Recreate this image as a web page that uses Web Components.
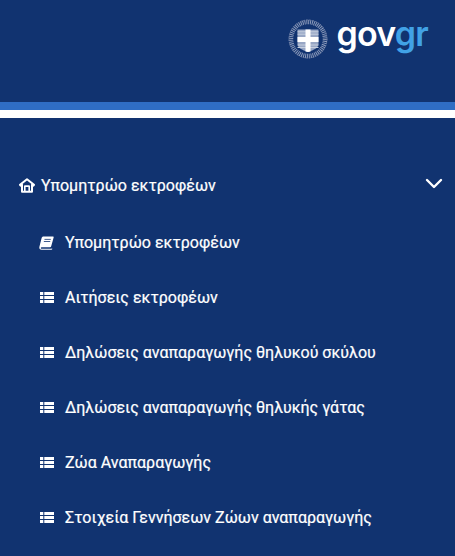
<!DOCTYPE html>
<html lang="el">
<head>
<meta charset="utf-8">
<title>Υπομητρώο εκτροφέων</title>
<style>
  html, body { margin: 0; height: 100%; background: #113370; }
  body { font-family: Roboto, "Liberation Sans", sans-serif; color: #fff; overflow: hidden; }
</style>
</head>
<body>
<gov-header></gov-header>
<side-menu>
  <menu-group label="Υπομητρώο εκτροφέων">
    <menu-link icon="book">Υπομητρώο εκτροφέων</menu-link>
    <menu-link icon="list">Αιτήσεις εκτροφέων</menu-link>
    <menu-link icon="list">Δηλώσεις αναπαραγωγής θηλυκού σκύλου</menu-link>
    <menu-link icon="list">Δηλώσεις αναπαραγωγής θηλυκής γάτας</menu-link>
    <menu-link icon="list">Ζώα Αναπαραγωγής</menu-link>
    <menu-link icon="list">Στοιχεία Γεννήσεων Ζώων αναπαραγωγής</menu-link>
  </menu-group>
</side-menu>
<script>
const ICONS = {
  home: `<svg width="16" height="15" viewBox="0 0 16 15"><path d="M8 1.200 1 6.800l.7.900 1.300-1V13.800h10V6.700l1.300 1 .7-.9L8 1.200Z" fill="none" stroke="#fff" stroke-width="2" stroke-linejoin="round"/><path d="M5 14V8.200c0-.5.4-.9.900-.9h4.200c.5 0 .9.4.9.9V14H9.400V9H6.600V14Z" fill="#fff"/></svg>`,
  book: `<svg width="17" height="16" viewBox="0 0 17 16"><path d="M5.300.5h10.400c.7 0 1.100.5.900 1.200l-2.800 10c-.2.700-.6 1-1.200 1H3.500c-1 0-1.500.3-1.500.9s.5 1 1.500 1h10.100c.3 0 .5-.1.700-.5l.9.300c-.2.700-.9 1.200-1.600 1.200H3C1 15.600 0 14.300.4 12.500L2.900 2.600C3.200 1.200 4 .5 5.300.5Z" fill="#fff"/><path d="M6.200 3.900h7.200M5.500 6.300h7.200" stroke="#113370" stroke-width=".9"/></svg>`,
  list: `<svg style="margin-left:1px" width="14" height="11" viewBox="0 0 14 11"><path d="M0 0h3.300v2.900H0ZM4.300 0H14v2.900H4.300ZM0 4h3.300v2.900H0ZM4.300 4H14v2.900H4.300ZM0 8h3.300v2.900H0ZM4.300 8H14v2.900H4.300Z" fill="#fff"/></svg>`
};

class GovHeader extends HTMLElement {
  constructor() {
    super();
    this.attachShadow({ mode: "open" });
    this.shadowRoot.innerHTML = `
      <style>
        :host { display: block; }
        .top { height: 102px; box-sizing: border-box; display: flex; justify-content: flex-end; align-items: flex-start; padding: 12px 27px 0 0; gap: 9px; }
        .logo { font: 600 34px/44px Inter, sans-serif; letter-spacing: -.8px; color: #fff; }
        .logo span { color: #41a2e6; }
        .emblem { margin-top: 7px; }
        .blue { height: 8px; background: #2f6dc4; }
        .white { height: 8px; background: #fff; }
      </style>
      <div class="top">
        <svg class="emblem" width="40" height="40" viewBox="0 0 40 40">
          <circle cx="20" cy="20" r="17" fill="none" stroke="#8e9cbb" stroke-width="4.500" stroke-dasharray="1 .9"/>
          <circle cx="20" cy="20" r="19" fill="none" stroke="#5f729c" stroke-width="1" stroke-dasharray="2 1"/>
          <path d="M9.500 10.500h21v14c0 4.500-4.500 6.500-10.500 8.500-6-2-10.500-4-10.500-8.500Z" fill="#98a7c5"/>
          <path d="M9.500 12.800h21M9.500 15.200h21M9.500 26h21M9.500 28.500h21" stroke="#c6cfdf" stroke-width="1"/>
          <path d="M17.500 10.500h5v7.500h8v5h-8v9.600l-2.500.4-2.500-.4V23h-8v-5h8Z" fill="#fff"/>
        </svg>
        <div class="logo">gov<span>gr</span></div>
      </div>
      <div class="blue"></div>
      <div class="white"></div>`;
  }
}

class SideMenu extends HTMLElement {
  constructor() {
    super();
    this.attachShadow({ mode: "open" });
    this.shadowRoot.innerHTML = `
      <style>
        :host { display: block; padding-top: 50px; }
      </style>
      <slot></slot>`;
  }
}

class MenuGroup extends HTMLElement {
  constructor() {
    super();
    this.attachShadow({ mode: "open" });
    this.shadowRoot.innerHTML = `
      <style>
        :host { display: block; }
        .head { display: flex; align-items: center; height: 34px; padding: 0 12px 0 19px; gap: 6px; font-size: 16px; -webkit-text-stroke: .2px #fff; }
        .label { flex: 1; }
        .chev { margin-top: -3px; }
        .items { display: flex; flex-direction: column; padding-top: 13px; }
      </style>
      <div class="head">
        ${ICONS.home}
        <span class="label"></span>
        <svg class="chev" width="18" height="11" viewBox="0 0 18 11"><path d="M2 2l7 7 7-7" fill="none" stroke="#fff" stroke-width="2.400" stroke-linecap="round" stroke-linejoin="round"/></svg>
      </div>
      <div class="items"><slot></slot></div>`;
    this.shadowRoot.querySelector(".label").textContent = this.getAttribute("label");
  }
}

class MenuLink extends HTMLElement {
  constructor() {
    super();
    this.attachShadow({ mode: "open" });
    this.shadowRoot.innerHTML = `
      <style>
        :host { display: flex; align-items: center; height: 55px; padding-left: 39px; gap: 11px; font-size: 16px; white-space: nowrap; -webkit-text-stroke: .2px #fff; }
        .ico { width: 15px; display: flex; }
      </style>
      <span class="ico">${ICONS[this.getAttribute("icon")]}</span>
      <slot></slot>`;
  }
}

customElements.define("gov-header", GovHeader);
customElements.define("side-menu", SideMenu);
customElements.define("menu-group", MenuGroup);
customElements.define("menu-link", MenuLink);
</script>
</body>
</html>
